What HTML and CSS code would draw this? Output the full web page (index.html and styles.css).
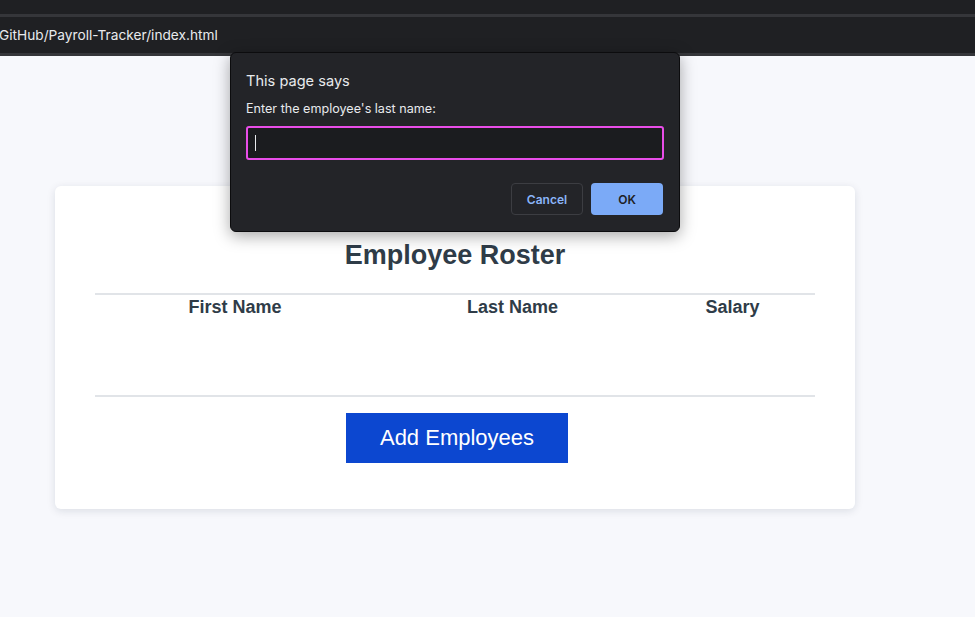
FILE: index.html
```html
<!DOCTYPE html>
<html lang="en">
<head>
<meta charset="utf-8">
<title>Payroll Tracker</title>
<link rel="stylesheet" href="styles.css">
</head>
<body>
<div class="chrome">
  <div class="tabstrip"></div>
  <div class="sep"></div>
  <div class="urlbar"><span class="url">GitHub/Payroll-Tracker/index.html</span></div>
  <div class="sep"></div>
</div>
<main class="page">
  <section class="card">
    <h1 class="title">Employee Roster</h1>
    <div class="table">
      <div class="thead">
        <div class="th">First Name</div>
        <div class="th">Last Name</div>
        <div class="th">Salary</div>
      </div>
      <div class="tbody"></div>
    </div>
    <div class="actions">
      <button class="add-btn">Add Employees</button>
    </div>
  </section>
</main>
<div class="dialog">
  <div class="dlg-title">This page says</div>
  <div class="dlg-msg">Enter the employee's last name:</div>
  <div class="dlg-input"><span class="caret"></span></div>
  <div class="dlg-buttons">
    <button class="btn-cancel">Cancel</button>
    <button class="btn-ok">OK</button>
  </div>
</div>
</body>
</html>
```

FILE: styles.css
```css
* { box-sizing: border-box; }
html, body { margin: 0; padding: 0; }
body {
  width: 975px;
  height: 617px;
  overflow: hidden;
  background: #f7f8fc;
  font-family: "Liberation Sans", Arial, sans-serif;
  position: relative;
}
.chrome { background: #1f2023; }
.tabstrip { height: 14px; background: #1f2023; }
.sep { height: 3px; background: #35363a; }
.urlbar {
  height: 36px;
  background: #1f2023;
  display: flex;
  align-items: center;
}
.url {
  font-family: Inter, "Noto Sans", sans-serif;
  font-size: 13.7px;
  color: #e8eaed;
  margin-left: -1px;
}
.page {
  padding: 130px 0 0 55px;
}
.card {
  width: 800px;
  background: #fff;
  border-radius: 6px;
  box-shadow: 0 2px 8px rgba(20, 30, 60, 0.12);
  padding: 53px 40px 46px;
}
.title {
  margin: 0;
  text-align: center;
  font-size: 27px;
  line-height: 32px;
  font-weight: bold;
  color: #2f3c48;
}
.table { margin-top: 22px; }
.thead {
  display: grid;
  grid-template-columns: 280px 275px 165px;
  border-top: 2px solid #e1e4e8;
  padding-top: 1px;
}
.th {
  text-align: center;
  font-weight: bold;
  font-size: 18px;
  line-height: 22px;
  color: #2f3c48;
}
.tbody {
  height: 79px;
  border-bottom: 2px solid #e1e4e8;
}
.actions {
  display: flex;
  justify-content: center;
  margin-top: 16px;
  padding-left: 4px;
}
.add-btn {
  width: 222px;
  height: 50px;
  border: 0;
  border-radius: 0;
  background: #0c47d0;
  color: #fff;
  font-family: "Liberation Sans", Arial, sans-serif;
  font-size: 22px;
}
.dialog {
  position: absolute;
  left: 230px;
  top: 52px;
  width: 450px;
  height: 180px;
  background: #232428;
  border: 1px solid #0c0c0e;
  border-radius: 6px;
  box-shadow: 0 4px 16px rgba(0, 0, 0, 0.35);
  padding: 18px 15px 0 15px;
  font-family: Inter, "Noto Sans", sans-serif;
}
.dlg-title {
  color: #e8eaed;
  font-size: 14.6px;
  line-height: 20px;
}
.dlg-msg {
  margin-top: 10px;
  color: #e8eaed;
  font-size: 12.6px;
  line-height: 16px;
}
.dlg-input {
  margin-top: 9px;
  width: 418px;
  height: 34px;
  border: 2px solid #e94de8;
  border-radius: 3px;
  background: #1b1c1f;
  display: flex;
  align-items: center;
  padding-left: 7px;
}
.caret {
  width: 1px;
  height: 16px;
  background: #e8eaed;
}
.dlg-buttons {
  margin-top: 23px;
  display: flex;
  justify-content: flex-end;
  gap: 8px;
  width: 417px;
}
.btn-cancel, .btn-ok {
  width: 72px;
  height: 32px;
  border-radius: 4px;
  font-family: Inter, "Noto Sans", sans-serif;
  font-size: 12px;
  font-weight: 600;
}
.btn-cancel {
  background: #232428;
  border: 1px solid #3c3d42;
  color: #8ab4f8;
}
.btn-ok {
  background: #7baaf7;
  border: 0;
  color: #202124;
}
```
